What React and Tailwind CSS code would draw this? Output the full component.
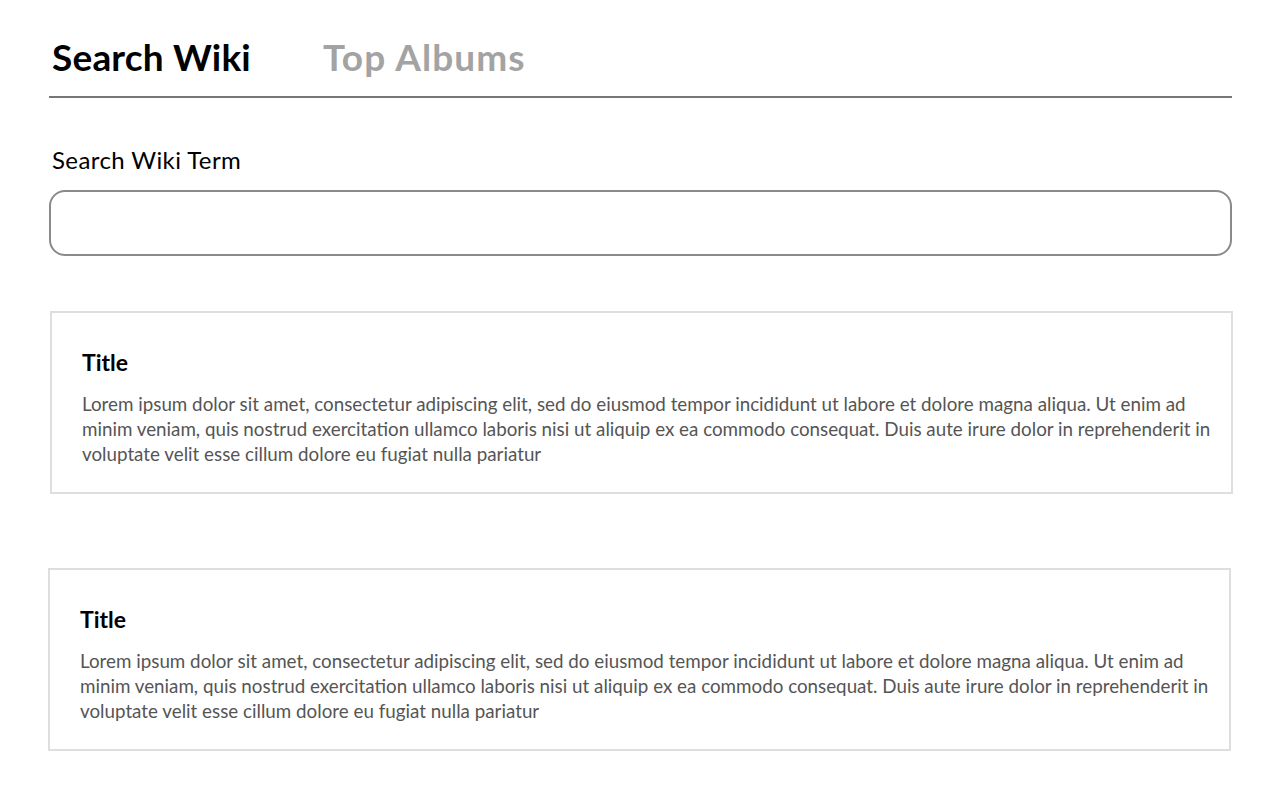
import { useState } from 'react'

const lorem =
  'Lorem ipsum dolor sit amet, consectetur adipiscing elit, sed do eiusmod tempor incididunt ut labore et dolore magna aliqua. Ut enim ad minim veniam, quis nostrud exercitation ullamco laboris nisi ut aliquip ex ea commodo consequat. Duis aute irure dolor in reprehenderit in voluptate velit esse cillum dolore eu fugiat nulla pariatur'

function Card({ title, body, className = '' }) {
  return (
    <div className={`border-2 border-[#dedede] bg-white pl-[30px] pr-[12px] pt-[34px] pb-[26px] ${className}`}>
      <h2 className="text-[23px] font-bold leading-[30px] text-black">{title}</h2>
      <p className="mt-[14px] text-[18.8px] leading-[25px] text-[#555]">{body}</p>
    </div>
  )
}

export default function App() {
  const [tab, setTab] = useState('wiki')
  const [term, setTerm] = useState('')

  return (
    <div className="min-h-screen bg-white font-['Lato','Noto_Sans',sans-serif] text-black">
      <div className="pl-[49px] pr-[48px] pt-[33px]">
        {/* Tabs */}
        <div className="flex items-end gap-[72px] border-b-2 border-[#777] pb-[15px] pl-[3px]">
          <button
            type="button"
            onClick={() => setTab('wiki')}
            className={`text-[37px] font-bold leading-[48px] tracking-[0.2px] ${tab === 'wiki' ? 'text-black' : 'text-[#a3a3a3]'}`}
          >
            Search Wiki
          </button>
          <button
            type="button"
            onClick={() => setTab('albums')}
            className={`text-[37px] font-bold leading-[48px] tracking-[1.1px] ${tab === 'albums' ? 'text-black' : 'text-[#a3a3a3]'}`}
          >
            Top Albums
          </button>
        </div>

        {/* Search */}
        <label className="mt-[47px] block pl-[3px] text-[24px] leading-[30px] tracking-[0.4px]">Search Wiki Term</label>
        <input
          value={term}
          onChange={(e) => setTerm(e.target.value)}
          className="mt-[15px] block h-[66px] w-[1183px] rounded-[16px] border-2 border-[#8a8a8a] px-4 text-[20px] outline-none"
        />

        {/* Results */}
        <Card title="Title" body={lorem} className="mt-[55px] ml-px w-[1183px]" />
        <Card title="Title" body={lorem} className="mt-[74px] -ml-px w-[1183px]" />
      </div>
    </div>
  )
}
